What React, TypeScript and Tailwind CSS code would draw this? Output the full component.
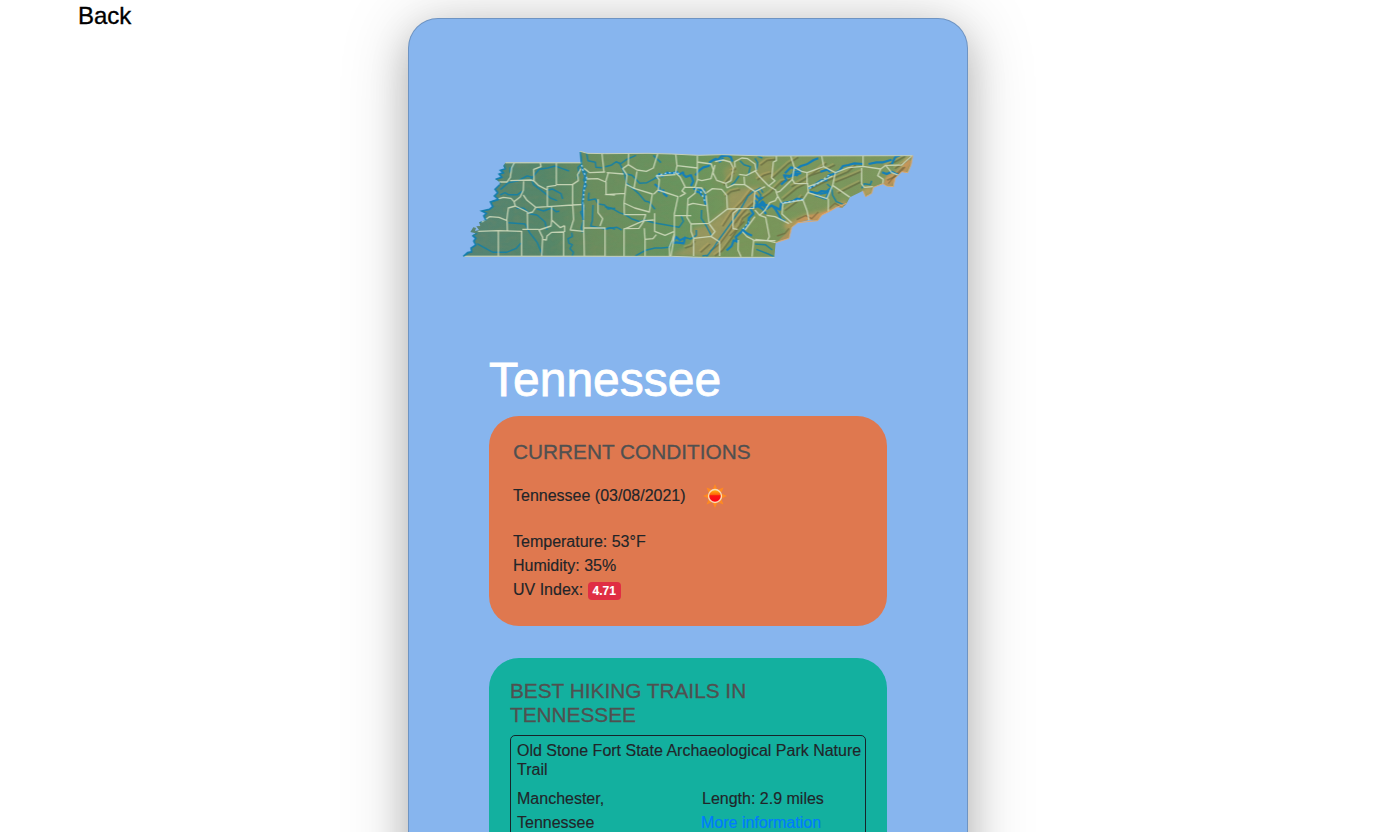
const outline =
  'M25 349 L38 337 50 335 48 324 62 315 56 303 62 295 52 286 62 280 46 276 55 262 63 264 60 273 72 270 64 259 76 258 72 247 92 240 86 228 94 220 80 213 103 208 113 200 106 186 118 180 130 178 118 168 128 158 120 148 134 134 135 127 122 118 140 112 132 102 144 98 136 91 149 87 145 78 151 68 378 68 376 34 397 40 450 41 580 40 650 42 730 46 800 44 930 48 1373 47 1368 75 1358 98 1340 95 1320 115 1315 140 1295 138 1284 131 1255 142 1250 160 1232 170 1224 152 1185 172 1175 190 1162 203 1145 200 1125 213 1100 225 1088 242 1060 240 1028 248 1010 262 1002 295 975 302 962 308 958 351 740 352 650 349Z';

const counties = [
  'M25 349H450M151 68H378L376 34',
  'M178 68L170 84 166 112 156 126H133M165 122L228 120 237 123 236 88 258 80 256 68M304 68V134H352L370 122 368 104 378 86M237 123L250 136 277 150V140L304 136M206 124L205 151 196 170 177 185 181 198 217 216 218 268M118 180L145 172 168 175 177 185M205 165L216 181 242 202 277 200 277 150M242 202L233 216 218 220M277 200L290 199 290 240 316 263 329 257M290 199L353 195 353 134M353 195L387 193M353 195L356 238 346 270 386 274M290 240L288 258 252 270 263 292 260 348M80 247L103 230 132 232 156 242 157 273M181 198L160 204 155 242M69 274L130 272 200 274V349M130 272V348M202 268H252M263 298L274 300 276 288 290 277 326 276V348M329 257V276M386 195V262L388 348M386 264H450V348M387 85L404 98 450 96M441 42L447 97M394 117L428 116 452 126 460 98M453 126V163L480 165M429 178V218L443 236 435 258',
  'M521 41L520 74 503 86 516 105 510 160 450 164M520 74L546 90 574 94 595 84 608 42M455 98L506 102M546 94L537 145 511 132M510 162L507 189 539 204 583 216 592 162 537 145M507 189L508 224 572 224 566 242 520 262 507 267V348M596 163L610 149 613 120 604 108 662 104M609 150L669 170 658 222 658 290 648 348M662 42L666 77 727 84V48M666 77L662 98 676 112 690 140 681 153 691 160 674 170M727 84V118L740 122 768 116 775 90 769 72 726 66M690 142H720L727 120M753 162L740 144 724 143 720 160 699 176 696 232 708 252 762 250M699 195L714 190 753 197M753 166L762 250M755 158L772 146 800 148 815 166 817 205M780 65L804 60 826 66 835 84 828 122 812 130 785 121 774 98 780 75M840 82L839 65 860 54 878 56 900 72 904 91 874 106 852 103M816 144L838 133 869 134 900 155 896 205 817 207 762 250M812 130L816 144M869 134L867 110M900 155L930 140M599 220V274L630 286 656 275M506 266L552 265 568 242 596 240M568 265L570 298 594 296 604 284M570 298V348M658 280L652 300 643 322 644 348M658 227L709 227M708 252L708 274 716 295V348M716 295L768 289 780 275 763 252M768 289L794 306 794 348M853 205L834 220 834 266 848 268M862 275L876 290 896 300 891 350M850 300L849 330 858 350M893 302H962M900 230L870 270',
  'M964 48L964 62 955 66 950 114 960 122 941 138 962 150 968 170 961 182 944 188 930 211 914 226 900 210M900 92L912 108 941 138M1007 48L1018 82 1012 118 975 154 962 158M1012 118L1019 131 1058 130 1060 158 1116 176 1133 136 1185 172M1018 82L1040 94 1056 98V130M1100 48L1106 80 1141 98 1180 83 1224 79V48M1056 98L1106 80M1141 98L1133 136M1224 79L1277 87 1268 107 1285 118 1283 133M1220 84V132L1228 142 1254 140M1060 140L1082 132 1133 108M1277 87L1292 76 1340 75 1370 48M1292 76L1310 98 1331 106M1120 176V215M1060 155L1044 180 1056 212 1062 240M1044 180L1018 184 984 190 981 222 1010 248M914 226L932 232 943 290 937 302 900 298M937 302L962 308M935 226L960 230 1002 251M968 168L981 190',
];

const rivers = [
  'M28 348L41 338 50 336 48 324 62 315 56 304 63 295 54 286 66 280M75 247L94 239 86 228 94 220 80 213 103 208 114 199 106 186 129 179 118 168 128 158 120 148 136 130 121 118 141 112 133 102 146 98 135 91 151 86 146 72',
  'M165 82V96L177 70M136 149L160 128 190 122 216 108 233 112 252 88 278 84 300 78 322 86 342 93M135 165L150 158 160 164 188 164 201 154M228 113L236 134 268 158 286 174 306 182M277 151L292 147 318 161 323 177M184 205L206 205 226 222 246 225 270 246 276 270M246 207L266 213 290 204 303 215 313 214M160 248L210 252 224 278 247 308 262 344M66 311L86 322 114 337 154 337 184 325 198 309M350 278L352 290 339 296 342 310 352 314 345 326 355 337 352 348',
  'M376 36L380 72 369 82 372 98 367 116M380 86L394 98 386 120 394 136 386 152 383 185 388 207 377 216 386 238 379 264 383 278M394 37L399 62 421 67 423 82 441 83M402 158L400 181 421 177 430 192 449 195 459 207 481 205M414 195L412 242 407 258 450 267 466 263 480 268',
  'M450 80L468 76 484 65 496 72 515 58 543 46M492 66L502 86 509 102 515 130 534 146 550 160 570 183 582 186 600 208M503 100L531 106 554 130 576 128 600 115 610 104M595 46L618 68M450 200L471 205 493 218 510 224 529 236 555 245 568 240 596 248 630 254 672 262 685 244 678 226M450 267L486 262 500 270M541 348L560 337 575 330 600 324 620 324 642 322 650 306M688 292L706 297 724 286 724 270',
  'M740 210L739 235 754 258 769 286M755 350L778 320 792 299 825 253 858 205 879 168 900 150M758 346L742 348',
  'M880 106L886 80 867 74 855 62M828 135L838 128 852 108M900 153L916 144 924 158M900 55L908 68 905 90M908 48L922 54M900 312L931 314 952 330M904 328L940 342 956 350M908 152L918 166 908 190M1116 132L1130 144 1133 166 1144 185 1172 196M1220 145L1228 131 1246 134 1250 122',
];

const lakes = [
  'M604 116L613 102 621 109 636 98 651 100 665 95 672 104 684 97 686 105 693 111 706 106M599 132L614 145 612 154 625 151 627 162 637 170',
  'M707 103L715 124 708 138M721 106L732 92 745 82 761 78 765 66 778 58 790 59 798 49 816 46 828 52 832 65M780 55L794 65 805 54',
  'M715 148L728 144 738 152 747 149 751 165 748 177 752 194M720 153L735 158 741 168M653 304L664 291 675 301 690 293 686 310 664 307 654 309M815 331L830 318 836 301 847 305 842 291 860 275 870 265 880 251 882 234 895 221 886 206 912 197 922 184 930 193',
  'M860 268L875 280 891 287M900 165L914 179 924 171M900 180L910 195 921 191 934 207 950 196 960 206 965 214 972 225 978 238 990 243M900 193L923 207 933 222M914 196L941 195M955 199L975 209 978 190 995 187 1012 184 1026 176 1046 180M978 134L994 120 987 106 1006 108 1020 96 1040 91M990 100L1008 82 1022 88 1038 78 1055 73 1076 60 1090 55M998 112L1019 105 1038 99M1014 92L1028 108M1060 146L1078 135 1098 121 1114 121 1121 106 1136 102 1154 91 1164 78 1180 75 1198 70 1224 72M1063 155L1088 160 1099 153 1115 155 1126 145M1080 166L1112 176 1123 156 1094 162M1096 95L1117 89 1126 96M1241 72L1264 67 1284 67 1310 59M1281 97L1295 102 1310 95 1329 104M1310 73L1321 51 1335 46',
];

const ridges = [
  'M803 259L829 219 862 186 890 150M842 248L868 214 896 188M765 334L796 310 826 270 849 235 884 198M780 348L803 331 834 289 853 260 863 235 885 219M825 288L868 244M690 324L711 317 720 303M737 337L765 312',
  'M806 136L820 118 837 98M811 170L828 155 855 149M829 94L843 86M917 76L937 61 962 58M907 120L926 106 949 99M951 116L974 95 999 72 1030 52M912 182L946 158 980 125 1008 119M1010 140L1050 118 1090 89 1115 70M984 179L1025 145 1059 128M990 212L1028 184 1043 168M1060 109L1100 95 1140 75M1066 147L1110 125 1178 96 1202 75M1140 127L1178 112 1220 94M1149 160L1182 143 1217 126M1290 79L1324 64 1351 49M1320 86L1350 67 1368 50M1296 121L1324 108 1350 81',
];

const highlands = [
  'M1020 248L1051 226 1090 221 1122 210 1156 194 1176 190 1145 211 1088 245Z',
  'M1296 106L1331 93 1360 58 1370 64 1355 97 1320 116 1312 139 1285 133Z',
  'M970 302L985 288 1009 265 1000 296 970 306Z',
];

const sunRays = [0, 45, 90, 135, 180, 225, 270, 315];

function TennesseeMap() {
  return (
    <svg viewBox="0 0 1395 390" className="block h-[130px] w-[465px]" role="img" aria-label="Tennessee">
      <defs>
        <linearGradient id="land" x1="0" x2="1" y1="0" y2="0">
          <stop offset="0" stopColor="#558374" />
          <stop offset=".2" stopColor="#568768" />
          <stop offset=".29" stopColor="#6a8e5f" />
          <stop offset=".5" stopColor="#68955e" />
          <stop offset=".62" stopColor="#78965a" />
          <stop offset="1" stopColor="#7d985f" />
        </linearGradient>
        <filter id="soft" x="-20%" y="-20%" width="140%" height="140%">
          <feGaussianBlur stdDeviation="7" />
        </filter>
        <filter id="relief" x="0" y="0" width="100%" height="100%">
          <feTurbulence type="fractalNoise" baseFrequency=".04 .06" numOctaves="3" seed="8" />
          <feColorMatrix values="0 0 0 0 .25  0 0 0 0 .25  0 0 0 0 .12  1.6 0 0 0 -.65" />
        </filter>
        <clipPath id="state"><path d={outline} /></clipPath>
      </defs>
      <path d={outline} fill="url(#land)" />
      <g clipPath="url(#state)" fill="none" strokeLinejoin="round">
        <g filter="url(#soft)">
          <path d="M785 350L816 310 890 202 923 140 879 142 818 158 817 205 750 257 715 263 710 317 640 348Z" fill="#ad9a60" opacity=".68" />
          <path d="M815 130L805 90 833 70 850 96M900 105L905 68 950 52 960 110 925 130" fill="#a59358" opacity=".5" />
          <path d="M990 262L1050 236 1112 222 1175 190M1225 162L1250 146M1290 128L1325 108 1365 58" stroke="#d6a05d" strokeWidth="20" opacity=".7" />
        </g>
        <rect width="1395" height="390" filter="url(#relief)" opacity=".3" />
        {highlands.map((d) => <path key={d} d={d} fill="#d79058" opacity=".5" />)}
        {ridges.map((d) => (
          <g key={d}>
            <path d={d} stroke="#bda966" strokeWidth="6" opacity=".4" transform="translate(-4 -4)" />
            <path d={d} stroke="#5f5f38" strokeWidth="5" opacity=".55" />
          </g>
        ))}
        <path d="M1025 239L1052 227 1070 236 1090 216M1120 207L1140 190 1158 201M1300 131L1320 106 1345 82M966 288L990 280 1002 265" stroke="#705f38" strokeWidth="4" opacity=".6" />
        {rivers.map((d) => <path key={d} d={d} stroke="#147fa6" strokeWidth="4.5" opacity=".9" />)}
        {lakes.map((d) => <path key={d} d={d} stroke="#147fb8" strokeWidth="6.5" />)}
        {counties.map((d) => <path key={d} d={d} stroke="#ced9bb" strokeWidth="4" opacity=".9" />)}
        <path d="M379 75L384 95 393 116 386 146 382 190 384 240" stroke="#1682bd" strokeWidth="5" />
        <path d="M380 75L385 95 395 112 388 146 384 190M604 107L640 98 672 100M737 154L752 190M864 267L882 245M988 188L1045 178M1064 145L1092 129 1125 103" stroke="#a2daf5" strokeWidth="4" strokeDasharray="5 8" />
      </g>
      <path d="M151 68H378L376 34 397 40 450 41 580 40 650 42 730 46 800 44 930 48 1373 47M25 349H650L740 352H958" fill="none" stroke="#c6d0ba" strokeWidth="3" />
      <path d="M1373 47L1368 75 1358 98 1340 95 1320 115 1315 140 1295 138 1284 131 1255 142 1250 160 1232 170 1224 152M1175 190L1145 202 1125 213 1100 225 1088 242 1028 248 1010 262 1002 295 962 308" fill="none" stroke="#dfaa74" strokeWidth="3" />
      <path d="M25 349L38 337 50 335 48 324 62 315 56 303 62 295 52 286M92 240L86 228 94 220 80 213 103 208 113 200 106 186 130 178 118 168 128 158 120 148 134 134M122 118L140 112 132 102 144 98 136 91 149 87M376 36L379 68" fill="none" stroke="#147eae" strokeWidth="4.5" />
    </svg>
  );
}

function SunIcon() {
  return (
    <svg viewBox="0 0 24 24" className="ml-[17px] h-6 w-6 shrink-0" aria-hidden="true">
      <defs>
        <linearGradient id="sun" x1="0" x2="0" y1="0" y2="1">
          <stop offset="0" stopColor="#ffbd13" />
          <stop offset=".38" stopColor="#ff6a09" />
          <stop offset=".48" stopColor="#f91612" />
          <stop offset="1" stopColor="#ff0017" />
        </linearGradient>
      </defs>
      {sunRays.map((angle) => (
        <path key={angle} d="M12 0L14.2 5H9.8Z" fill="#ff8a20" transform={`rotate(${angle} 12 12)`} />
      ))}
      <circle cx="12" cy="12" r="6.5" fill="url(#sun)" stroke="#fbdcb0" strokeWidth="1.4" />
    </svg>
  );
}

export default function App() {
  return (
    <div className="flex h-screen items-start overflow-hidden bg-white font-['Liberation_Sans',Arial,sans-serif] text-base leading-6 text-[#212529] [-webkit-text-stroke:0.15px]">
      <a className="ml-[78px] w-[330px] shrink-0 pt-px text-2xl leading-[30px] text-black [-webkit-text-stroke:0.35px]">Back</a>
      <main className="mt-[18px] h-[1100px] w-[560px] shrink-0 rounded-[30px] border border-black/[.18] bg-[#87b5ee] shadow-[0_15px_38px_rgba(0,0,0,0.2),0_2px_70px_rgba(0,0,0,0.18)]">
        <div className="ml-[46px] pt-[121px]"><TennesseeMap /></div>
        <div className="mx-20 mt-[81px]">
          <h1 className="text-5xl leading-[57.6px] text-white [-webkit-text-stroke:0.8px]">Tennessee</h1>
          <section className="mt-[7px] h-[210px] rounded-[30px] bg-[#df784f] px-6 pt-6">
            <h2 className="text-[20.8px] leading-6 text-[#505050] [-webkit-text-stroke:0.3px]">CURRENT CONDITIONS</h2>
            <div className="mt-5 flex h-6 items-center"><p>Tennessee (03/08/2021)</p><SunIcon /></div>
            <div className="mt-[22px]">
              <p>Temperature: 53°F</p>
              <p>Humidity: 35%</p>
              <p className="flex">UV Index: <span className="ml-[5px] mt-1 h-[18px] w-[33px] rounded bg-[#e02e43] pr-px text-center text-xs font-bold leading-[18px] text-white">4.71</span></p>
            </div>
          </section>
          <section className="mt-8 h-[420px] rounded-[30px] bg-[#13b09f] px-[21px] pt-[21px]">
            <h2 className="w-[300px] text-[20.8px] leading-6 text-[#505050] [-webkit-text-stroke:0.3px]">BEST HIKING TRAILS IN TENNESSEE</h2>
            <article className="mt-2 h-[200px] rounded-[5px] border border-[#17242a] pl-1.5 pt-[5px]">
              <h3 className="leading-[19.2px]">Old Stone Fort State Archaeological Park Nature Trail</h3>
              <div className="mt-2 flex">
                <p className="w-[184px] pr-20">Manchester, Tennessee</p>
                <div><p className="pl-px">Length: 2.9 miles</p><a className="text-[#007bff]">More information</a></div>
              </div>
            </article>
          </section>
        </div>
      </main>
    </div>
  );
}
